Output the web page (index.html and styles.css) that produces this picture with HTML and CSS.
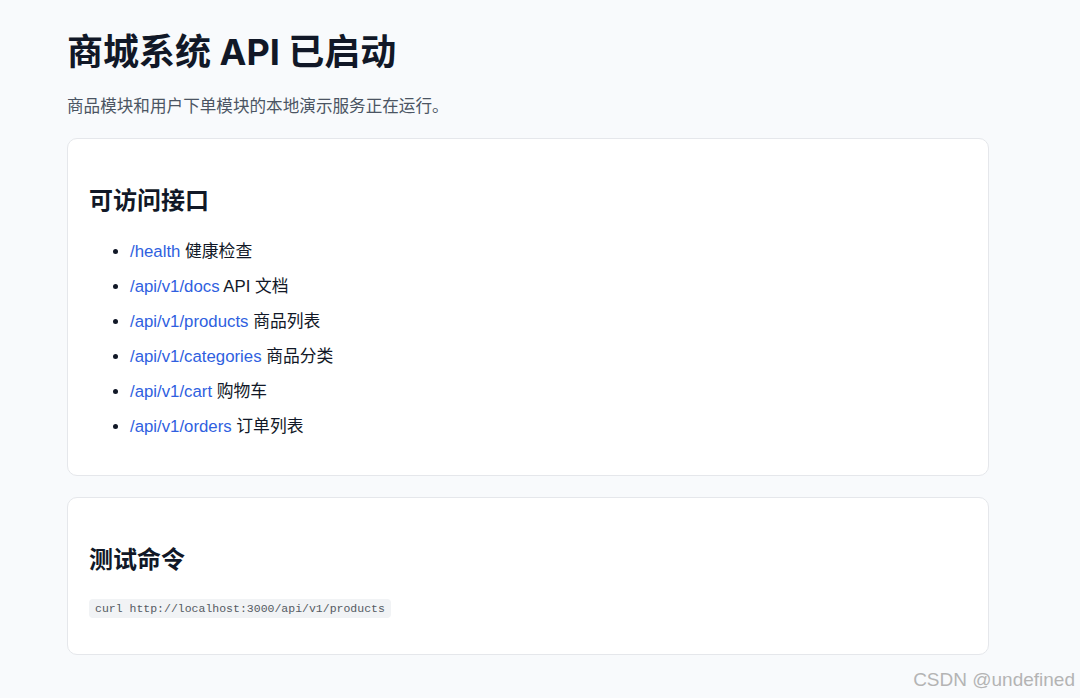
FILE: index.html
```html
<!DOCTYPE html>
<html lang="zh-CN">
<head>
    <meta charset="UTF-8">
    <meta name="viewport" content="width=device-width, initial-scale=1.0">
    <title>商城系统 API</title>
    <link rel="stylesheet" href="styles.css">
</head>
<body>
    <div id="container">
        <h1>商城系统 API 已启动</h1>
        <p class="lead">商品模块和用户下单模块的本地演示服务正在运行。</p>

        <div class="card">
            <h2>可访问接口</h2>
            <ul class="endpoints">
                <li><a href="/health">/health</a> 健康检查</li>
                <li><a href="/api/v1/docs">/api/v1/docs</a> API 文档</li>
                <li><a href="/api/v1/products">/api/v1/products</a> 商品列表</li>
                <li><a href="/api/v1/categories">/api/v1/categories</a> 商品分类</li>
                <li><a href="/api/v1/cart">/api/v1/cart</a> 购物车</li>
                <li><a href="/api/v1/orders">/api/v1/orders</a> 订单列表</li>
            </ul>
        </div>

        <div class="card">
            <h2>测试命令</h2>
            <p class="cmd"><code>curl http://localhost:3000/api/v1/products</code></p>
        </div>
    </div>
    <div class="watermark">CSDN @undefined</div>
</body>
</html>
```

FILE: styles.css
```css
body {
    font-family: "Liberation Sans", Arial, "Noto Sans CJK SC", sans-serif;
    background-color: #f8fafc;
    color: #111827;
    margin: 0;
    padding: 0;
}

#container {
    width: 922px;
    padding: 31px 0 0 67px;
}

h1 {
    font-family: Inter, "Noto Sans CJK SC", sans-serif;
    font-size: 36px;
    font-weight: 700;
    line-height: 43px;
    margin: 0 0 21px 0;
}

.lead {
    font-size: 16.6px;
    line-height: 24px;
    color: #4b5563;
    margin: 0 0 19px 0;
}

.card {
    background: #fff;
    border: 1px solid #e5e7eb;
    border-radius: 10px;
    padding: 25px 22px 20px 21px;
    margin-bottom: 21px;
}

h2 {
    font-family: Inter, "Noto Sans CJK SC", sans-serif;
    font-size: 24px;
    font-weight: 700;
    line-height: 36px;
    margin: 19px 0 20px 0;
}

.endpoints {
    margin: 16px 0;
    padding-left: 41px;
}

.endpoints li {
    font-size: 16.8px;
    line-height: 25px;
    margin: 10px 0;
}

.endpoints a {
    color: #2f5fe0;
    text-decoration: none;
}

.cmd {
    margin: 16px 0;
    line-height: 18px;
}

code {
    font-family: "Liberation Mono", "Courier New", monospace;
    font-size: 11.5px;
    color: #555b63;
    background: #f1f3f5;
    border-radius: 4px;
    padding: 3px 6px;
}

.watermark {
    position: absolute;
    right: 5px;
    top: 669px;
    font-family: "Liberation Sans", Arial, sans-serif;
    font-size: 19px;
    color: #b4b4b4;
}
```
